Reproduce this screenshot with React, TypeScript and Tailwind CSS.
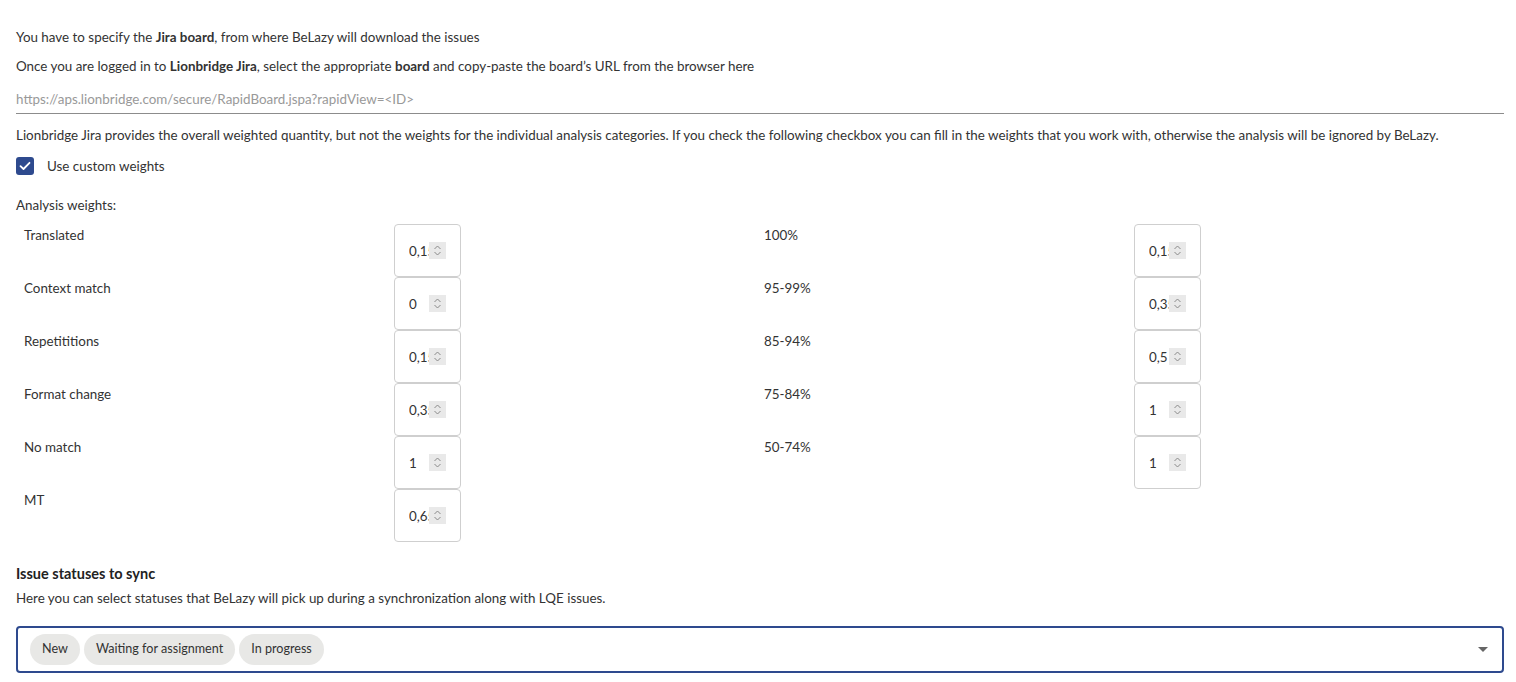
import React from "react";

const left = [
  { label: "Translated", value: "0,15" },
  { label: "Context match", value: "0" },
  { label: "Repetititions", value: "0,15" },
  { label: "Format change", value: "0,35" },
  { label: "No match", value: "1" },
  { label: "MT", value: "0,65" },
];

const right = [
  { label: "100%", value: "0,15" },
  { label: "95-99%", value: "0,35" },
  { label: "85-94%", value: "0,5" },
  { label: "75-84%", value: "1" },
  { label: "50-74%", value: "1" },
];

const NumberBox = ({ value }: { value: string }) => (
  <div className="w-[67px] h-[53px] border border-[#cfcfcf] rounded-[4px] flex items-center pl-[14px] bg-white">
    <span className="w-[24px] overflow-hidden whitespace-nowrap text-[13.4px] text-[#333]">{value}</span>
    <span className="relative -ml-[4px] w-[17px] h-[17px] bg-[#e9e9e9] flex items-center justify-center">
      <svg width="9" height="13" viewBox="0 0 9 13" fill="none" stroke="#8a8a8a" strokeWidth="1">
        <path d="M1.5 5 L4.5 2 L7.5 5" />
        <path d="M1.5 8 L4.5 11 L7.5 8" />
      </svg>
    </span>
  </div>
);

const WeightCell = ({ label, value }: { label: string; value: string }) => (
  <>
    <div className="h-[53px] pt-[1px] text-[13.4px] text-[#333]">{label}</div>
    <div className="h-[53px]">
      <NumberBox value={value} />
    </div>
  </>
);

export default function App() {
  return (
    <div className="bg-white min-h-screen pl-4 pr-3 pt-[27px] text-[13.4px] text-[#333] font-['Lato','Liberation_Sans',sans-serif]">
      <p className="leading-[20px]">
        You have to specify the <b>Jira board</b>, from where BeLazy will download the issues
      </p>
      <p className="leading-[20px] mt-[9px]">
        Once you are logged in to <b>Lionbridge Jira</b>, select the appropriate <b>board</b> and copy-paste the board’s URL from the browser here
      </p>
      <div className="mt-[13px] border-b border-[#8c8c8c] pb-[4px]">
        <input
          className="w-full outline-none text-[13.4px] leading-[20px] placeholder:text-[#999]"
          placeholder="https://aps.lionbridge.com/secure/RapidBoard.jspa?rapidView=<ID>"
        />
      </div>
      <p className="leading-[20px] mt-[11px]">
        Lionbridge Jira provides the overall weighted quantity, but not the weights for the individual analysis categories. If you check the following checkbox you can fill in the weights that you work with, otherwise the analysis will be ignored by BeLazy.
      </p>
      <label className="flex items-center gap-[13px] mt-[11px] h-[20px]">
        <span className="w-[18px] h-[18px] rounded-[3px] bg-[#2e4a8e] flex items-center justify-center">
          <svg width="12" height="10" viewBox="0 0 12 10" fill="none" stroke="white" strokeWidth="1.8" strokeLinecap="round" strokeLinejoin="round">
            <path d="M1.5 5.2 L4.5 8 L10.5 1.8" />
          </svg>
        </span>
        <span>Use custom weights</span>
      </label>
      <p className="leading-[20px] mt-[19px]">Analysis weights:</p>
      <div className="mt-[9px] ml-2 grid grid-cols-[370px_370px_370px_370px]">
        <div className="grid grid-cols-[370px_370px] col-span-2">
          {left.map((w) => (
            <WeightCell key={w.label} label={w.label} value={w.value} />
          ))}
        </div>
        <div className="grid grid-cols-[370px_370px] col-span-2 content-start">
          {right.map((w) => (
            <WeightCell key={w.label} label={w.label} value={w.value} />
          ))}
        </div>
      </div>
      <h3 className="mt-[22px] text-[14.5px] font-bold leading-[20px] text-[#222]">Issue statuses to sync</h3>
      <p className="mt-[4px] leading-[20px]">
        Here you can select statuses that BeLazy will pick up during a synchronization along with LQE issues.
      </p>
      <div className="mt-[18px] h-[47px] border-2 border-[#2e4a8e] rounded-[4px] flex items-center pl-[12px] pr-[14px]">
        <div className="flex gap-[4px] flex-1">
          {["New", "Waiting for assignment", "In progress"].map((s) => (
            <span key={s} className="h-[31px] px-[12px] rounded-full bg-[#e8e8e6] flex items-center text-[12.6px] text-[#333]">
              {s}
            </span>
          ))}
        </div>
        <svg width="10" height="6" viewBox="0 0 10 6">
          <path d="M0 0 L10 0 L5 5 Z" fill="#666" />
        </svg>
      </div>
    </div>
  );
}
